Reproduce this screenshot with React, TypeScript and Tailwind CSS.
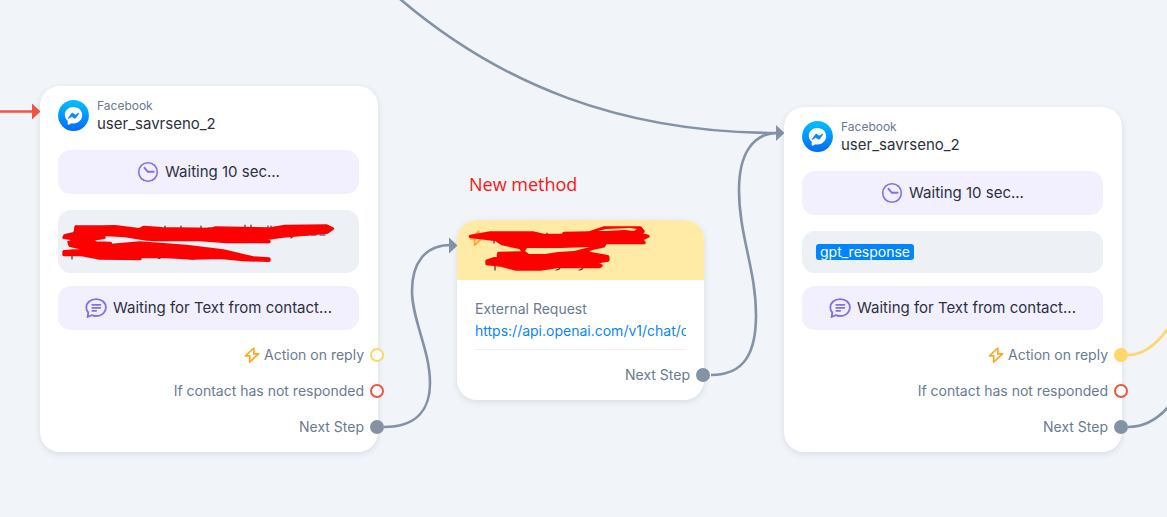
import type { ReactNode } from "react";

const STEEL = "#8492a6";

function MessengerIcon({ id }: { id: string }) {
  return (
    <svg viewBox="0 0 32 32" className="size-[31px] shrink-0" aria-hidden="true">
      <defs>
        <linearGradient id={id} x1="0" y1="0" x2="0" y2="1">
          <stop offset="0" stopColor="#00c0ff" />
          <stop offset="1" stopColor="#006aff" />
        </linearGradient>
      </defs>
      <circle cx="16" cy="16" r="15.9" fill={`url(#${id})`} />
      <path
        fill="#fff"
        d="M16 7.2c-5.2 0-9 3.600-9 8.100 0 2.500 1.100 4.600 3 6.100v3.500c0 .6.500.900 1 .700l3-1.600c.7.100 1.300.200 2 .200 5.200 0 9-3.900 9-8.600s-3.800-8.400-9-8.400z"
      />
      <path
        fill="#0a8cff"
        d="M10.300 18.600l3.300-4.700c.5-.7 1.500-.8 2.100-.3l2.100 1.600 3.300-2c.5-.3 1 .2.700.7l-3.300 4.600c-.5.700-1.400.8-2.100.3l-2.200-1.600-3.200 2.100c-.5.300-1-.2-.7-.7z"
      />
    </svg>
  );
}

function ClockIcon() {
  return (
    <svg viewBox="0 0 22 22" className="size-[22px] shrink-0" fill="none" stroke="#8470e6" aria-hidden="true">
      <circle cx="11" cy="11" r="9.300" strokeWidth="1.600" />
      <path d="M7.500 6.800l3.200 3.900h6" strokeWidth="1.900" strokeLinecap="round" strokeLinejoin="round" />
    </svg>
  );
}

function ChatIcon() {
  return (
    <svg viewBox="0 0 22 22" className="size-[22px] shrink-0" fill="none" stroke="#8470e6" strokeWidth="1.800" strokeLinecap="round" strokeLinejoin="round" aria-hidden="true">
      <path d="M3.300 15.500C2 14.200 1.300 12.500 1.300 10.600c0-5 4.200-8.500 9.900-8.500s9.700 3.500 9.700 8.400-4.100 8.500-9.700 8.500c-1.800 0-3.300-.3-4.700-.8L2.600 20z" />
      <path d="M7.200 7.800h8.200M7.200 10.800h8.200M7.200 13.800h4" />
    </svg>
  );
}

function BoltIcon() {
  return (
    <svg viewBox="0 0 16 16" className="size-4 shrink-0" fill="none" stroke="#ffa726" strokeWidth="1.700" strokeLinejoin="round" aria-hidden="true">
      <path d="M9.800 1L1.500 8.800h4.300L5.600 15.200 14.500 6.900h-4.700z" />
    </svg>
  );
}

type PortTone = "yellow" | "yellowFilled" | "red" | "steel";

const portTones: Record<PortTone, string> = {
  yellow: "border-[#ffd66b] bg-white",
  yellowFilled: "border-[#ffd66b] bg-[#ffd66b]",
  red: "border-[#f0563f] bg-white",
  steel: "border-[#8492a6] bg-[#8492a6]",
};

function Output({ label, tone, icon }: { label: string; tone: PortTone; icon?: ReactNode }) {
  return (
    <div className="-mr-1.5 flex h-9 items-center justify-end gap-1.5 text-sm text-[#6b7a93]">
      <span className="flex items-center gap-1">
        {icon}
        {label}
      </span>
      <button type="button" aria-label={label} className={`size-3.5 rounded-full border-2 ${portTones[tone]}`} />
    </div>
  );
}

function WaitBlock({ icon, children }: { icon: ReactNode; children: ReactNode }) {
  return (
    <div className="flex h-11 items-center justify-center gap-1.5 rounded-[13px] bg-[#f2efff]">
      {icon}
      <span className="leading-6">{children}</span>
    </div>
  );
}

function FacebookCard({ id, message, actionTone }: { id: string; message: ReactNode; actionTone: PortTone }) {
  return (
    <article className="w-[338px] rounded-[20px] bg-white pb-[7px] text-[15px] text-[#2d313e] shadow-[0_2px_6px_rgba(71,85,120,0.14)]">
      <div className="pr-[19px] pl-[18px]">
        <header className="flex h-16 items-center gap-2 pb-[5px]">
          <MessengerIcon id={id} />
          <div>
            <p className="text-xs leading-4 text-[#6b7a93]">Facebook</p>
            <h2 className="leading-5">user_savrseno_2</h2>
          </div>
        </header>
        <WaitBlock icon={<ClockIcon />}>Waiting 10 sec...</WaitBlock>
        <div className="mt-4 mb-[13px] rounded-[13px] bg-[#edf0f4] px-3.5">{message}</div>
        <WaitBlock icon={<ChatIcon />}>Waiting for Text from contact...</WaitBlock>
      </div>
      <div className="pt-[7px]">
        <Output label="Action on reply" tone={actionTone} icon={<BoltIcon />} />
        <Output label="If contact has not responded" tone="red" />
        <Output label="Next Step" tone="steel" />
      </div>
    </article>
  );
}

function RequestCard() {
  return (
    <article className="w-[247px] rounded-[20px] bg-white pb-[7px] text-sm shadow-[0_2px_6px_rgba(71,85,120,0.14)]">
      <header className="h-[60px] rounded-t-[20px] bg-[#ffeaa6] px-3 pt-2.5">
        <BoltIcon />
      </header>
      <div className="mx-[18px] border-b border-[#eef0f3] pt-[18px] pb-[7px] leading-[22px]">
        <p className="text-[#6b7a93]">External Request</p>
        <a href="https://api.openai.com/v1/chat/completions" className="block overflow-hidden whitespace-nowrap text-[#0b84ff]">
          https://api.openai.com/v1/chat/completions
        </a>
      </div>
      <div className="pt-[7px]">
        <Output label="Next Step" tone="steel" />
      </div>
    </article>
  );
}

function Connectors() {
  return (
    <svg width="1167" height="517" className="absolute top-0 left-0" fill="none" strokeWidth="2.600" aria-hidden="true">
      <path d="M0 111.500h34" stroke="#f0563f" />
      <path d="M32 103.500l8.500 8-8.500 8z" fill="#f0563f" />
      <g stroke={STEEL}>
        <path d="M400 -1C500 84 620 133 778 133" />
        <path d="M384 427C418 427 430 408 430 383C430 350 412 320 412 291C412 263 425 245 451 245" />
        <path d="M711 375C745 375 756 352 756 315C756 270 739 235 739 190C739 155 752 133 778 133" />
        <path d="M1128 427C1144 427 1157 420 1169 406" />
      </g>
      <path d="M1128 355C1144 355 1157 344 1169 327" stroke="#ffd66b" />
      <path d="M449 237.500l8.500 8-8.500 8zM776 125l8.500 8-8.500 8z" fill={STEEL} />
    </svg>
  );
}

function Scribbles() {
  return (
    <svg width="1167" height="517" className="pointer-events-none absolute top-0 left-0" fill="none" strokeLinecap="round" strokeLinejoin="round" aria-hidden="true">
      <path
        stroke="#333"
        strokeWidth="1.200"
        d="M73 235l3-9M82 237q0 2-2 2M86 226v2M118 226v2M165 226v3M181 226v3M201 226v2M208 228h4M245 225v4M251 225v4M268 226v1M271 226v1M293 235q0 2-2 3M304 235h4M311 235h5M320 235h5M324 227v3M72 250v9M158 258q2 1 3-1M190 259h4M494 237v6M547 233v3M621 243h6M632 243h2M495 266v4M556 270q3 0 4-2M579 270q3 0 4-2"
      />
      <g fill="#f00" stroke="#f00" strokeWidth="10" transform="translate(40 200) scale(.3333)">
        <path d="M108 81L185 81L225 80L298 89L312 82L365 86L515 88L525 84L690 87L735 79L860 78L877 86L860 97L790 103L730 108L680 115L687 125L560 125L480 119L350 119L320 117L255 107L190 103L192 112L150 119L168 129L211 130L213 136L300 129L440 139L550 153L640 174L687 177L687 181L610 179L540 172L460 174L380 170L298 169L300 176L180 174L125 164L72 164V155L150 150L90 136L87 127L115 119L72 112L75 107L106 100z" />
      </g>
      <path fill="#edf0f4" d="M107 238l6-1 11 1v2l-12 1-5-1z" />
      <g fill="#f00" stroke="#f00" strokeWidth="10" transform="translate(462 220) scale(.3333)">
        <path d="M25 49L85 39L215 39L245 46L302 46L306 40L380 39L425 24L535 24L543 34L535 43L558 49L537 58L546 68L480 67L430 68L425 78L385 87L370 98L437 110L438 120L395 127L417 137L410 140L290 139L235 147L160 147L115 135L75 131L75 123L109 112L110 100L175 99L188 103L176 83L120 71L102 59z" />
      </g>
      <path fill="#ffeaa6" d="M598 231l8-2 24-1 7 1-3 2-9-1-20 1zM527 248h34l29-1-16 4-16 1-13 2h-16l-4-3z" />
    </svg>
  );
}

export default function App() {
  return (
    <main className="relative min-h-screen overflow-hidden bg-[#f1f4f8] font-['Inter',sans-serif]">
      <Connectors />
      <div className="absolute top-[86px] left-[40px]">
        <FacebookCard id="messenger-a" actionTone="yellow" message={<div className="h-[63px]" />} />
      </div>
      <p className="absolute top-[172px] left-[469px] font-['Open_Sans',sans-serif] text-lg leading-6 text-[#ff1414]">New method</p>
      <div className="absolute top-[220px] left-[457px]">
        <RequestCard />
      </div>
      <div className="absolute top-[107px] left-[784px]">
        <FacebookCard
          id="messenger-b"
          actionTone="yellowFilled"
          message={
            <div className="flex h-[42px] items-center">
              <span className="rounded-[3px] bg-[#0084ff] px-1 text-sm leading-4 text-white">gpt_response</span>
            </div>
          }
        />
      </div>
      <Scribbles />
    </main>
  );
}
